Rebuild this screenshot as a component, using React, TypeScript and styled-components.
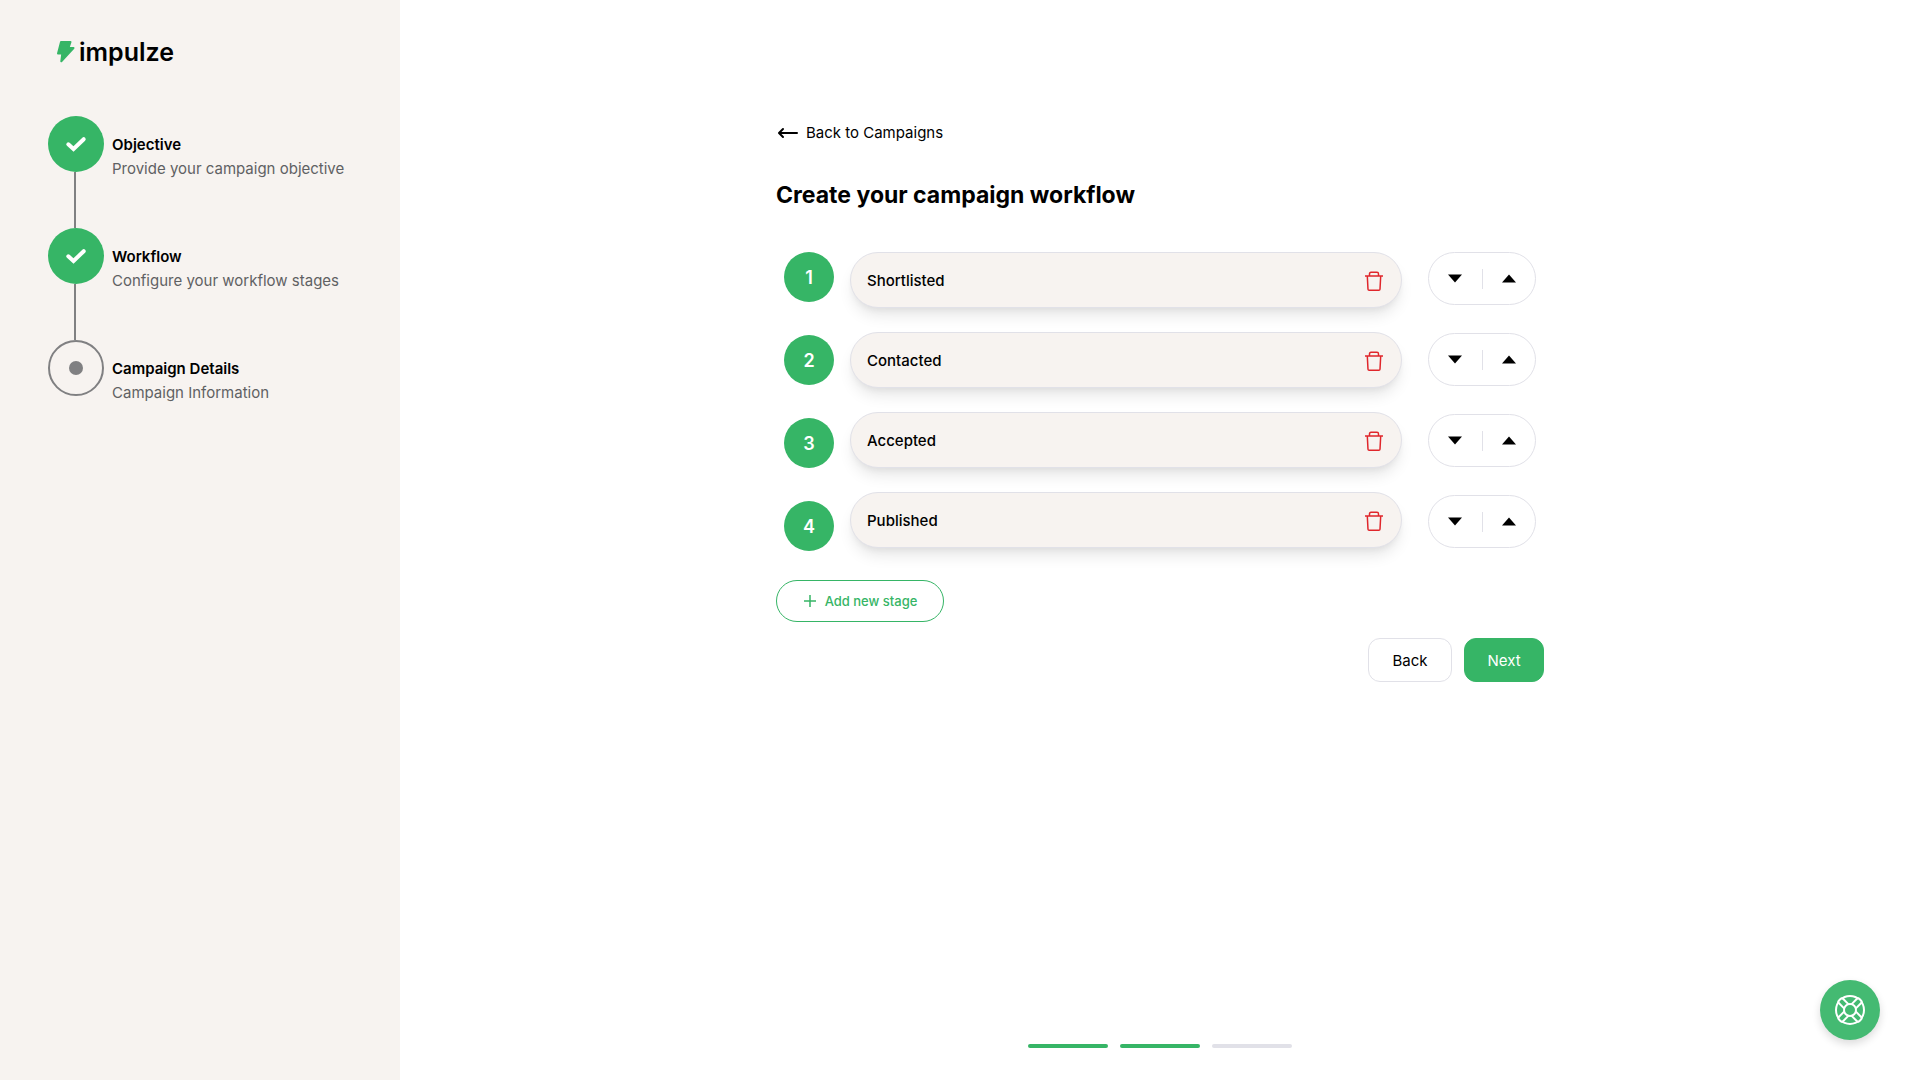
import React, { useState } from "react";
import styled, { createGlobalStyle } from "styled-components";

const GREEN = "#36b566";
const SAND = "#f7f3f0";
const LINE = "#e1e1e8";
const GREY = "#808082";
const HELP_GREEN = "#44ba72";

const GlobalStyle = createGlobalStyle`
  *, *::before, *::after { box-sizing: border-box; }
  body {
    margin: 0;
    background: #fff;
    color: #000;
    font-family: Inter, "Liberation Sans", sans-serif;
    font-size: 15px;
    line-height: 24px;
  }
  button { font: inherit; color: inherit; cursor: pointer; }
  h1, p, ol, ul { margin: 0; padding: 0; }
  ol, ul { list-style: none; }
  svg { display: block; }
`;

const Page = styled.div`
  display: flex;
  min-height: 100vh;
`;

const Sidebar = styled.aside`
  flex: 0 0 400px;
  background: ${SAND};
  padding: 36px 48px;
`;

const Logo = styled.a`
  display: flex;
  align-items: center;
  gap: 4px;
  height: 32px;
  margin: 0 0 48px 8px;
  color: #000;
  text-decoration: none;
  font-size: 25px;
  font-weight: 600;
`;

const Step = styled.li`
  display: flex;
  gap: 8px;
`;

const StepTrack = styled.div`
  display: flex;
  flex-direction: column;
  align-items: center;
  width: 56px;
`;

const StepMark = styled.div<{ $done: boolean }>`
  display: grid;
  place-items: center;
  width: 56px;
  height: 56px;
  border-radius: 50%;
  color: #fff;
  background: ${(p) => (p.$done ? GREEN : "transparent")};
  border: ${(p) => (p.$done ? "none" : `2px solid ${GREY}`)};
`;

const StepDot = styled.span`
  width: 14px;
  height: 14px;
  border-radius: 50%;
  background: ${GREY};
`;

const StepLine = styled.span`
  width: 2px;
  height: 56px;
  margin-right: 2px;
  background: ${GREY};
`;

const StepText = styled.div`
  padding-top: 17px;
`;

const StepTitle = styled.p`
  font-weight: 600;
`;

const StepNote = styled.p`
  color: #5f6163;
`;

const Main = styled.main`
  flex: 1;
  display: flex;
  flex-direction: column;
  align-items: center;
  justify-content: space-between;
  padding: 121px 0 32px 2px;
`;

const Content = styled.div`
  width: 100%;
  max-width: 768px;
`;

const BackLink = styled.a`
  display: inline-flex;
  align-items: center;
  gap: 6px;
  color: #000;
  text-decoration: none;
`;

const Title = styled.h1`
  margin: 27px 0 41px;
  font-size: 23px;
  line-height: 32px;
  font-weight: 700;
`;

const Board = styled.div`
  display: flex;
  padding: 0 8px;
`;

const Numbers = styled.ol`
  display: grid;
  gap: 33px;
  margin-right: 16px;
`;

const NumberBadge = styled.li`
  display: grid;
  place-items: center;
  width: 50px;
  height: 50px;
  padding-top: 2px;
  border-radius: 50%;
  background: ${GREEN};
  color: #fff;
  font-size: 18px;
  font-weight: 600;
`;

const Stages = styled.ul`
  flex: 1;
  display: flex;
  flex-direction: column;
  gap: 24px;
`;

const Stage = styled.li`
  display: flex;
  align-items: center;
  justify-content: space-between;
  height: 56px;
  padding: 2px 18px 0 16px;
  border: 1px solid ${LINE};
  border-radius: 28px;
  background: ${SAND};
  box-shadow: 0 10px 15px -3px rgba(0, 0, 0, 0.1), 0 4px 6px -2px rgba(0, 0, 0, 0.05);
  font-weight: 500;
`;

const IconButton = styled.button`
  display: grid;
  place-items: center;
  padding: 0;
  border: 0;
  background: none;
`;

const Movers = styled.ul`
  display: flex;
  flex-direction: column;
  gap: 28px;
  margin-left: 26px;
`;

const Mover = styled.li`
  display: flex;
  align-items: center;
  width: 108px;
  height: 53px;
  border: 1px solid ${LINE};
  border-radius: 27px;

  ${IconButton} {
    flex: 1;
    height: 100%;
  }
`;

const Divider = styled.span`
  width: 1px;
  height: 20px;
  background: ${LINE};
`;

const AddButton = styled.button`
  display: flex;
  align-items: center;
  justify-content: center;
  gap: 8px;
  width: 168px;
  height: 42px;
  margin-top: 29px;
  padding: 0;
  border: 1px solid ${GREEN};
  border-radius: 21px;
  background: #fff;
  color: ${GREEN};
  font-size: 13px;
  font-weight: 500;
`;

const Actions = styled.div`
  display: flex;
  justify-content: flex-end;
  gap: 12px;
  margin-top: 16px;
`;

const ActionButton = styled.button<{ $primary?: boolean }>`
  height: 44px;
  width: ${(p) => (p.$primary ? 80 : 84)}px;
  padding: 2px 0 0;
  border: 1px solid ${(p) => (p.$primary ? GREEN : LINE)};
  border-radius: 12px;
  background: ${(p) => (p.$primary ? GREEN : "#fff")};
  color: ${(p) => (p.$primary ? "#fff" : "#000")};
`;

const Progress = styled.div`
  display: flex;
  gap: 12px;
`;

const ProgressBar = styled.span<{ $on: boolean }>`
  width: 80px;
  height: 4px;
  border-radius: 2px;
  background: ${(p) => (p.$on ? GREEN : LINE)};
`;

const HelpButton = styled.button`
  position: fixed;
  right: 38px;
  bottom: 40px;
  display: grid;
  place-items: center;
  width: 60px;
  height: 60px;
  padding: 0;
  border: 0;
  border-radius: 50%;
  background: ${HELP_GREEN};
  color: #fff;
  box-shadow: 0 4px 8px rgba(0, 0, 0, 0.14);
`;

const Bolt = () => (
  <svg width="19" height="24" viewBox="0 0 19 24" aria-hidden="true">
    <path
      d="M5 2h9.500L12.500 8h5L5.300 21.300 6.300 13.500H2z"
      fill={GREEN}
      stroke={GREEN}
      strokeWidth="2"
      strokeLinejoin="round"
    />
  </svg>
);

const Check = () => (
  <svg width="22" height="18" viewBox="0 0 22 18" fill="none" stroke="#fff" strokeWidth="4" strokeLinecap="round" strokeLinejoin="miter" aria-hidden="true">
    <path d="M3.300 9.300l5.200 4.700 10.200-9.800" />
  </svg>
);

const Trash = () => (
  <svg width="18" height="20" viewBox="0 0 18 20" fill="none" stroke="#e0262b" strokeWidth="1.500" strokeLinejoin="round" aria-hidden="true">
    <path d="M0 5h18M4.500 5V3q0-1.700 1.500-1.700h6q1.500 0 1.500 1.700v2M2.300 5l.7 13.200q.1 1 1.100 1h9.800q1 0 1.100-1l.7-13.200" />
  </svg>
);

const Lifebuoy = () => (
  <svg width="32" height="32" viewBox="0 0 32 32" fill="none" stroke="#fff" strokeWidth="2" aria-hidden="true">
    <circle cx="16" cy="16" r="14" />
    {[45, 135, 225, 315].map((angle) => (
      <path
        key={angle}
        d="M21 13h7.500q2 0 2 2v2q0 2-2 2H21"
        fill={HELP_GREEN}
        transform={`rotate(${angle} 16 16)`}
      />
    ))}
    <circle cx="16" cy="16" r="6" fill={HELP_GREEN} />
  </svg>
);

const Arrow = () => (
  <svg width="24" height="24" viewBox="0 0 24 24" fill="none" stroke="#000" strokeWidth="2" strokeLinecap="round" strokeLinejoin="round" aria-hidden="true">
    <path d="M21 12H3.500M7 8l-4 4 4 4" />
  </svg>
);

const Plus = () => (
  <svg width="14" height="14" viewBox="0 0 14 14" stroke={GREEN} strokeWidth="1.500" aria-hidden="true">
    <path d="M7 1v12M1 7h12" />
  </svg>
);

const Triangle = ({ up = false }: { up?: boolean }) => (
  <svg width="14" height="9" viewBox="0 0 14 9" aria-hidden="true">
    <path d={up ? "M7 0.500L14 8.500H0z" : "M0 0.500h14L7 8.500z"} />
  </svg>
);

const steps = [
  { title: "Objective", note: "Provide your campaign objective", done: true },
  { title: "Workflow", note: "Configure your workflow stages", done: true },
  { title: "Campaign Details", note: "Campaign Information", done: false },
];

export default function App() {
  const [stages, setStages] = useState(["Shortlisted", "Contacted", "Accepted", "Published"]);

  const move = (from: number, to: number) => {
    if (to < 0 || to >= stages.length) return;
    const next = [...stages];
    [next[from], next[to]] = [next[to], next[from]];
    setStages(next);
  };

  return (
    <Page>
      <GlobalStyle />
      <Sidebar>
        <Logo href="#">
          <Bolt />
          impulze
        </Logo>
        <ol>
          {steps.map((s, i) => (
            <Step key={s.title}>
              <StepTrack>
                <StepMark $done={s.done}>{s.done ? <Check /> : <StepDot />}</StepMark>
                {i < steps.length - 1 && <StepLine />}
              </StepTrack>
              <StepText>
                <StepTitle>{s.title}</StepTitle>
                <StepNote>{s.note}</StepNote>
              </StepText>
            </Step>
          ))}
        </ol>
      </Sidebar>
      <Main>
        <Content>
          <BackLink href="#">
            <Arrow />
            Back to Campaigns
          </BackLink>
          <Title>Create your campaign workflow</Title>
          <Board>
            <Numbers>
              {stages.map((name, i) => (
                <NumberBadge key={name}>{i + 1}</NumberBadge>
              ))}
            </Numbers>
            <Stages>
              {stages.map((name) => (
                <Stage key={name}>
                  {name}
                  <IconButton aria-label={`Delete ${name}`} onClick={() => setStages(stages.filter((s) => s !== name))}>
                    <Trash />
                  </IconButton>
                </Stage>
              ))}
            </Stages>
            <Movers>
              {stages.map((name, i) => (
                <Mover key={name}>
                  <IconButton aria-label={`Move ${name} down`} onClick={() => move(i, i + 1)}>
                    <Triangle />
                  </IconButton>
                  <Divider />
                  <IconButton aria-label={`Move ${name} up`} onClick={() => move(i, i - 1)}>
                    <Triangle up />
                  </IconButton>
                </Mover>
              ))}
            </Movers>
          </Board>
          <AddButton onClick={() => setStages([...stages, `Stage ${stages.length + 1}`])}>
            <Plus />
            Add new stage
          </AddButton>
          <Actions>
            <ActionButton>Back</ActionButton>
            <ActionButton $primary>Next</ActionButton>
          </Actions>
        </Content>
        <Progress>
          {[true, true, false].map((on, i) => (
            <ProgressBar key={i} $on={on} />
          ))}
        </Progress>
      </Main>
      <HelpButton aria-label="Help">
        <Lifebuoy />
      </HelpButton>
    </Page>
  );
}
